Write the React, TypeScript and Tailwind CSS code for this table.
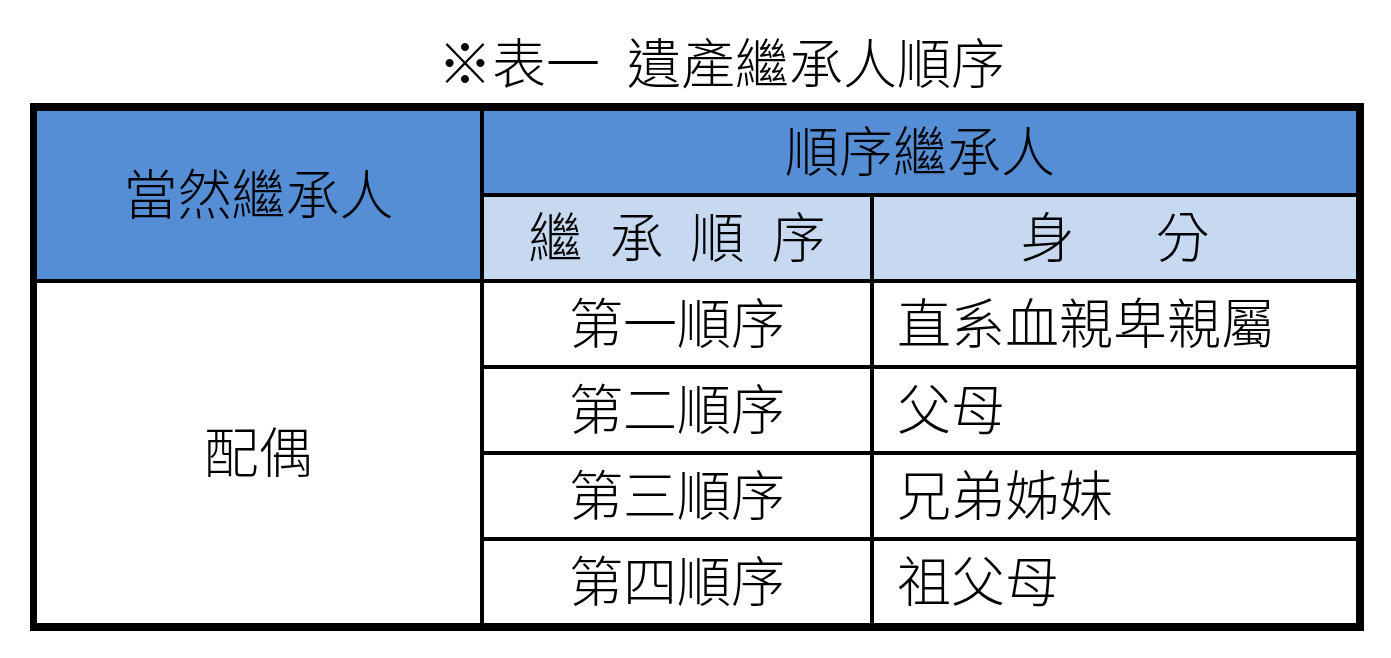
const FONT = { fontFamily: '"Noto Sans CJK TC", "Noto Sans CJK SC", sans-serif' }

const ROWS = [
  { order: '第一順序', who: '直系血親卑親屬' },
  { order: '第二順序', who: '父母' },
  { order: '第三順序', who: '兄弟姊妹' },
  { order: '第四順序', who: '祖父母' },
]

export default function App() {
  return (
    <div className="w-[1391px] h-[658px] bg-white text-black font-light" style={FONT}>
      {/* Title */}
      <div className="h-[103px] pt-[34px] pl-[438px]">
        <h1 className="flex text-[54px] leading-none gap-[27px]">
          <span>※表一</span>
          <span>遺產繼承人順序</span>
        </h1>
      </div>

      {/* Table */}
      <div className="ml-[30px] w-[1334px] bg-black p-[8px] pl-[7px]">
        <div className="grid grid-cols-[443px_386px_482px] grid-rows-[repeat(6,82px)] gap-x-[4px] gap-y-[4px] text-[54px] leading-none">
          <div className="row-span-2 bg-[#558ed5] flex items-center justify-center pb-[6px]">當然繼承人</div>
          <div className="col-span-2 bg-[#558ed5] flex items-center justify-center pb-[6px]">順序繼承人</div>
          <div className="bg-[#c6d9f1] flex items-center justify-center gap-[27px] pb-[6px]">
            <span>繼</span><span>承</span><span>順</span><span>序</span>
          </div>
          <div className="bg-[#c6d9f1] flex items-center justify-center gap-[81px] pb-[6px]">
            <span>身</span><span>分</span>
          </div>

          <div className="row-span-4 bg-white flex items-center justify-center pb-[6px]">配偶</div>
          {ROWS.map((r) => (
            <>
              <div key={r.order} className="bg-white flex items-center justify-center pb-[6px]">{r.order}</div>
              <div key={r.who} className="bg-white flex items-center pl-[23px] pb-[6px]">{r.who}</div>
            </>
          ))}
        </div>
      </div>
    </div>
  )
}
